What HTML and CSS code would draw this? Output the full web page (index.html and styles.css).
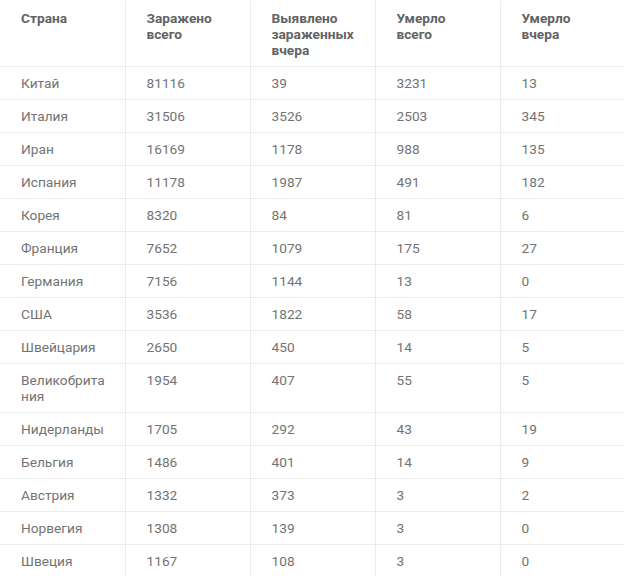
FILE: index.html
```html
<!DOCTYPE html>
<html lang="ru">
<head>
<meta charset="utf-8">
<title>Статистика</title>
<link rel="stylesheet" href="styles.css">
</head>
<body>
<table class="stats">
  <thead>
    <tr>
      <th>Страна</th>
      <th>Заражено всего</th>
      <th>Выявлено зараженных вчера</th>
      <th>Умерло всего</th>
      <th>Умерло вчера</th>
    </tr>
  </thead>
  <tbody>
    <tr><td>Китай</td><td>81116</td><td>39</td><td>3231</td><td>13</td></tr>
    <tr><td>Италия</td><td>31506</td><td>3526</td><td>2503</td><td>345</td></tr>
    <tr><td>Иран</td><td>16169</td><td>1178</td><td>988</td><td>135</td></tr>
    <tr><td>Испания</td><td>11178</td><td>1987</td><td>491</td><td>182</td></tr>
    <tr><td>Корея</td><td>8320</td><td>84</td><td>81</td><td>6</td></tr>
    <tr><td>Франция</td><td>7652</td><td>1079</td><td>175</td><td>27</td></tr>
    <tr><td>Германия</td><td>7156</td><td>1144</td><td>13</td><td>0</td></tr>
    <tr><td>США</td><td>3536</td><td>1822</td><td>58</td><td>17</td></tr>
    <tr><td>Швейцария</td><td>2650</td><td>450</td><td>14</td><td>5</td></tr>
    <tr><td>Великобрита<br>ния</td><td>1954</td><td>407</td><td>55</td><td>5</td></tr>
    <tr><td>Нидерланды</td><td>1705</td><td>292</td><td>43</td><td>19</td></tr>
    <tr><td>Бельгия</td><td>1486</td><td>401</td><td>14</td><td>9</td></tr>
    <tr><td>Австрия</td><td>1332</td><td>373</td><td>3</td><td>2</td></tr>
    <tr><td>Норвегия</td><td>1308</td><td>139</td><td>3</td><td>0</td></tr>
    <tr class="last"><td>Швеция</td><td>1167</td><td>108</td><td>3</td><td>0</td></tr>
  </tbody>
</table>
</body>
</html>
```

FILE: styles.css
```css
html, body {
  margin: 0;
  padding: 0;
  background: #fff;
}

body {
  font-family: Roboto, "Noto Sans", sans-serif;
  font-size: 13.7px;
  line-height: 16px;
  color: #737373;
}

.stats {
  width: 624px;
  border-collapse: collapse;
  table-layout: fixed;
  margin-top: 1px;
}

.stats th,
.stats td {
  box-sizing: border-box;
  width: 125px;
  padding: 8px 20px 8px 21px;
  text-align: left;
  vertical-align: top;
  border-left: 1px solid #ececec;
}

.stats th:first-child,
.stats td:first-child {
  border-left: none;
}

.stats th {
  font-weight: 700;
  color: #636363;
  padding-top: 9px;
  padding-bottom: 8px;
  border-bottom: 1px solid #ececec;
}

.stats tbody tr {
  border-bottom: 1px solid #ececec;
}

.stats tbody tr.last {
  border-bottom: none;
}

.stats td {
  font-weight: 400;
}
```
